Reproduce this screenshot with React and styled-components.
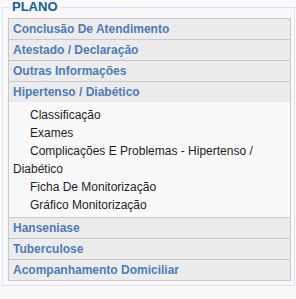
import styled, { createGlobalStyle } from "styled-components";

const Global = createGlobalStyle`
  body {
    margin: 0;
    background: #f9f9f9;
    font-family: "Liberation Sans", Arial, sans-serif;
  }
`;

const Frame = styled.fieldset`
  box-sizing: border-box;
  width: 293px;
  margin: 0 0 0 2px;
  padding: 4px 3px 4px 5px;
  border: 1px solid #d9e4f5;
`;

const Legend = styled.legend`
  padding: 0 2px;
  margin-left: 2px;
  font-size: 13px;
  line-height: 14px;
  font-weight: bold;
  color: #0d5fa6;
`;

const List = styled.div`
  border: 1px solid #c9c9c9;
  border-top: none;
`;

const Header = styled.div`
  border-top: 1px solid #c9c9c9;
  height: 20px;
  line-height: 20px;
  padding-left: 4px;
  background: #ececec;
  font-size: 12px;
  font-weight: bold;
  color: #4a7cbf;
`;

const Panel = styled.div`
  background: #f9f9f9;
  padding: 4px 6px 3px 4px;
`;

const Item = styled.div`
  text-indent: 17px;
  font-size: 12px;
  line-height: 18px;
  color: #1e1e1e;
`;

const sections = [
  { title: "Conclusão De Atendimento" },
  { title: "Atestado / Declaração" },
  { title: "Outras Informações" },
  {
    title: "Hipertenso / Diabético",
    items: [
      "Classificação",
      "Exames",
      "Complicações E Problemas - Hipertenso / Diabético",
      "Ficha De Monitorização",
      "Gráfico Monitorização",
    ],
  },
  { title: "Hanseniase" },
  { title: "Tuberculose" },
  { title: "Acompanhamento Domiciliar" },
];

const App = () => {
  return (
    <>
      <Global />
      <Frame>
        <Legend>PLANO</Legend>
        <List>
          {sections.map((s) => (
            <div key={s.title}>
              <Header>{s.title}</Header>
              {s.items && (
                <Panel>
                  {s.items.map((i) => (
                    <Item key={i}>{i}</Item>
                  ))}
                </Panel>
              )}
            </div>
          ))}
        </List>
      </Frame>
    </>
  );
};

export default App;
